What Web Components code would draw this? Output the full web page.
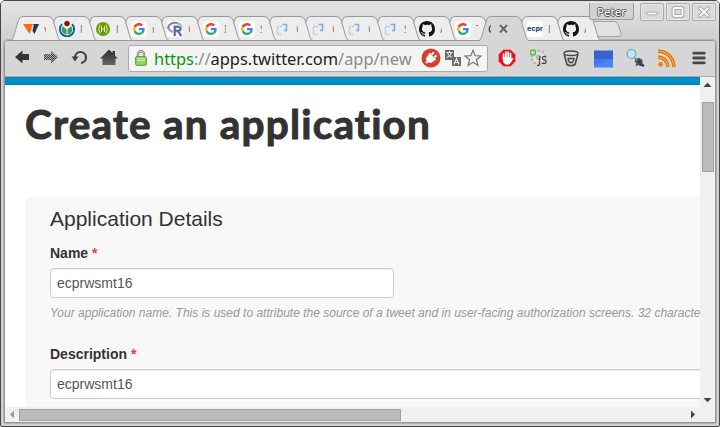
<!DOCTYPE html>
<html lang="en"><head><meta charset="utf-8"><title>Create an application</title>
<style>html,body{margin:0;width:720px;height:427px;overflow:hidden;background:#fff}</style></head>
<body><app-window></app-window>
<script>
const define=(name,html)=>customElements.define(name,class extends HTMLElement{
  connectedCallback(){ if(this.shadowRoot)return; const r=this.attachShadow({mode:'open'}); r.innerHTML=typeof html==='function'?html(this):html; }
});
const ICONS={
google:`<svg viewBox="0 0 16 16" width="16" height="16"><rect width="16" height="16" rx="4" fill="#fff"/><g transform="translate(2 2) scale(.25)"><path fill="#EA4335" d="M24 9.5c3.5 0 6.700 1.200 9.200 3.600l6.900-6.900C35.900 2.400 30.500 0 24 0 14.600 0 6.500 5.400 2.600 13.200l8 6.200C12.400 13.700 17.700 9.500 24 9.500z"/><path fill="#4285F4" d="M47 24.600c0-1.600-.2-3.100-.4-4.600H24v9h12.900c-.6 3-2.300 5.500-4.800 7.200l7.700 6C44.400 38 47 32 47 24.600z"/><path fill="#FBBC05" d="M10.500 28.600a14.500 14.500 0 0 1 0-9.200l-8-6.200a24 24 0 0 0 0 21.600z"/><path fill="#34A853" d="M24 48c6.500 0 11.900-2.100 15.900-5.800l-7.700-6c-2.200 1.500-4.900 2.300-8.200 2.300-6.300 0-11.600-4.200-13.500-9.900l-8 6.200C6.500 42.600 14.600 48 24 48z"/></g></svg>`,
github:`<svg viewBox="0 0 16 16" width="16" height="16"><path fill="#111" d="M8 0C3.580 0 0 3.580 0 8c0 3.540 2.290 6.530 5.470 7.590.4.070.55-.17.55-.38 0-.19-.01-.82-.01-1.490-2.010.37-2.530-.49-2.690-.94-.09-.23-.48-.94-.82-1.130-.28-.15-.68-.52-.01-.53.63-.01 1.080.58 1.230.82.72 1.210 1.870.87 2.330.66.070-.52.280-.87.510-1.070-1.780-.2-3.640-.89-3.640-3.950 0-.87.31-1.590.82-2.150-.08-.2-.36-1.020.08-2.120 0 0 .67-.21 2.200.82.64-.18 1.320-.27 2-.27s1.360.09 2 .27c1.530-1.040 2.200-.82 2.200-.82.44 1.100.16 1.920.08 2.120.51.56.82 1.270.82 2.150 0 3.070-1.870 3.750-3.650 3.950.29.25.54.73.54 1.480 0 1.070-.01 1.930-.01 2.200 0 .21.15.46.55.38A8.010 8.010 0 0 0 16 8c0-4.420-3.580-8-8-8z"/></svg>`,
wk:`<svg viewBox="0 0 16 16" width="16" height="16"><path fill="#ff6a13" d="M0 3h11L6.500 13z"/><path fill="#c8d4dc" d="M9 4h2L7.500 12z"/><path fill="#26344f" d="M11 3h5l-4.500 10-2-3z"/></svg>`,
wikimedia:`<svg viewBox="0 0 16 16" width="16" height="16"><path d="M3 3.200a7.100 7.100 0 1 0 10 0" fill="none" stroke="#086698" stroke-width="1.900"/><path d="M3.900 5.200l3.600 3v5.300a5 5 0 0 1-3.600-8.300zm8.200 0l-3.600 3v5.300a5 5 0 0 0 3.600-8.300z" fill="#399a66"/><circle cx="8" cy="2.600" r="2.700" fill="#990a0a"/></svg>`,
green:`<svg viewBox="0 0 16 16" width="16" height="16"><circle cx="8" cy="8" r="7" fill="#6b9c08"/><path d="M5 3.500Q2.500 8 5 12.500M11 3.500Q13.500 8 11 12.500M6.500 5v6M9.500 5v6M6 8h4" stroke="#e3efc1" stroke-width=".9" fill="none"/></svg>`,
r:`<svg viewBox="0 0 16 16" width="16" height="16"><rect width="16" height="16" fill="#fff"/><ellipse cx="8" cy="6.500" rx="6.500" ry="4.600" fill="none" stroke="#a2a5aa" stroke-width="2.400"/><path d="M1.200 8C0 3 6 1 10 1.700" stroke="#686b70" fill="none"/><path d="M7.500 15V5.500h3.700c3.600 0 3.200 4.400.3 4.500L14.500 15M8 10h3" fill="none" stroke="#dce4f4" stroke-width="3.500"/><path d="M7.800 15V5.800h3.500c3.200 0 2.800 4 0 4H8M11 10l3.200 5" fill="none" stroke="#536bab" stroke-width="2"/></svg>`,
code:`<svg viewBox="0 0 16 16" width="16" height="16"><path d="M7 5.500H2.500v8H6" fill="none" stroke="#b5cbef" stroke-width="1.400" stroke-dasharray="2 .5"/><path d="M7.500 3.500h4v6H9" fill="none" stroke="#7ba6f2" stroke-width="1.500"/></svg>`,
ecpr:`<svg viewBox="0 0 16 16" width="16" height="16"><rect width="16" height="16" fill="#fff"/><text x="0" y="9.500" font-family="Inter, sans-serif" font-weight="800" font-size="6.600" textLength="16" lengthAdjust="spacingAndGlyphs" fill="#31506f">ecpr</text></svg>`,
back:`<svg viewBox="0 0 16 14" width="16" height="14"><path d="M1 7l7.500-6.500V4H15v6H8.500v3.500z" fill="#343434"/></svg>`,
forward:`<svg viewBox="0 0 16 14" width="16" height="14"><defs><pattern id="p" width="2" height="2" patternUnits="userSpaceOnUse"><rect width="2" height="2" fill="#aaa"/><rect width="1" height="1" fill="#444"/><rect x="1" y="1" width="1" height="1" fill="#444"/></pattern></defs><path d="M15 7L8 .5V4H1v6h7v3.500z" fill="url(#p)"/></svg>`,
reload:`<svg viewBox="0 0 18 16" width="18" height="16"><path d="M4 8.500a5.500 5.500 0 1 1 6 5.500" fill="none" stroke="#404040" stroke-width="2.200"/><path d="M.5 7.500h7L4 12.500z" fill="#404040"/></svg>`,
home:`<svg viewBox="0 0 18 17" width="18" height="17"><defs><linearGradient id="h" x2="0" y2="1"><stop stop-color="#2b2b2b"/><stop offset="1" stop-color="#666"/></linearGradient></defs><path d="M9 .5L0 9.500h2.500V16h13V9.500H18l-3-3V2h-2.500v2z" fill="url(#h)"/></svg>`,
lock:`<svg viewBox="0 0 12 16" width="12" height="16"><path d="M3 8V4.200a3 3 0 0 1 6 0V8" fill="none" stroke="#858585" stroke-width="2.400"/><path d="M3 8V4.200a3 3 0 0 1 6 0V8" fill="none" stroke="#ddd" stroke-width=".8"/><rect x=".7" y="6.700" width="10.600" height="8.600" rx="1" fill="#91d461" stroke="#4f9a2c"/><path d="M2 8.500h8M2 10.500h8" stroke="#c4eeaa"/></svg>`,
plug:`<svg viewBox="0 0 20 20" width="20" height="20"><circle cx="10" cy="10" r="9.500" fill="#d6402f"/><g transform="rotate(45 10 10)" fill="#fff"><path d="M6 8h8v3a4 4 0 0 1-8 0z"/><path d="M7 4h2v3H7zM11 4h2v3h-2zM5.300 7.300h9.400V9H5.300zM9 14h2v3H9z"/></g></svg>`,
translate:`<svg viewBox="0 0 16 16" width="16" height="16"><rect width="9" height="10" fill="#6c6c6c"/><path d="M1.500 2.500h6M4.500 1v1.500M2.500 3Q4 6.500 7.500 7.500M6.500 3Q5 6.500 1.500 7.500" stroke="#eee" fill="none"/><rect x="7" y="7" width="9" height="9" fill="#6c6c6c"/><path d="M9 14.500l2.500-6 2.500 6M10 12.500h3" stroke="#eee" fill="none" stroke-width="1.200"/></svg>`,
star:`<svg viewBox="0 0 18 18" width="18" height="18"><path d="M9 1.200l2.100 5.500 5.900.3-4.600 3.700 1.500 5.800L9 13.300l-4.900 3.200 1.500-5.800L1 7l5.900-.3z" fill="#f5f5f5" stroke="#777" stroke-width="1.200"/></svg>`,
hand:`<svg viewBox="0 0 18 18" width="18" height="18"><path d="M5.500.5h7l5 5v7l-5 5h-7l-5-5v-7z" fill="#e8141c" stroke="#e99" stroke-width=".6"/><path d="M5.600 10V5M7.900 9V3M10.200 9V3M12.500 10V4.600" stroke="#fff" stroke-width="1.700" stroke-linecap="round"/><path d="M4.800 8h8.500v2l1.300-1.200.9.500L13 13.500l-2 2H7.500L5 13z" fill="#fff"/></svg>`,
js:`<svg viewBox="0 0 18 18" width="18" height="18"><circle cx="8.500" cy="8.500" r="6.500" fill="#dedede" stroke="#b0b0b0" stroke-width="2.200" stroke-dasharray="2.700 1.400"/><circle cx="8.500" cy="8.500" r="5.900" fill="#e0e0e0"/><circle cx="8.500" cy="8.500" r="2.200" fill="#d0d0d0" stroke="#a5a5a5"/><circle cx="3" cy="3.500" r="2.600" fill="#b4ecac" stroke="#46b647" stroke-width="1.200"/><text x="8" y="15" font-family="Noto Sans,sans-serif" font-size="10.500" fill="#222" textLength="9">JS</text></svg>`,
trash:`<svg viewBox="0 0 16 17" width="16" height="17"><ellipse cx="8" cy="3.200" rx="7" ry="2.300" fill="#ddd" stroke="#484848" stroke-width="1.500"/><path d="M1.200 4.500L4 14.500q4 2.500 8 0l2.800-10" fill="none" stroke="#484848" stroke-width="1.600"/><path d="M4.500 8.500h7M5 9l1.500 3.500h3l1.500-3.500" fill="none" stroke="#444" stroke-width="1.300"/></svg>`,
calendar:`<svg viewBox="0 0 19 19" width="19" height="19"><path d="M2 0h3v2H2zM14 0h3v2h-3z" fill="#c7cce0"/><path d="M0 1.500h19V10H0z" fill="#3563d0"/><path d="M0 10h19v8.500H0z" fill="#4585f5"/><path d="M0 10h19l-5 1-14 5z" fill="#3f78e8"/></svg>`,
search:`<svg viewBox="0 0 19 18" width="19" height="18"><path d="M8.500 13l1-3 4-1 3 2v3l2 3-5-1-4 1 1-3z" fill="#435168"/><path d="M10 10l4 3M13 15l5 2" stroke="#213f71" stroke-width="2"/><path d="M8 8.500l3.500 3" stroke="#b88762" stroke-width="1.600"/><circle cx="5.500" cy="5" r="4.300" fill="#c1eaf7" stroke="#73a9ce" stroke-width="1.300"/></svg>`,
rss:`<svg viewBox="0 0 18 18" width="18" height="18"><g fill="none" stroke="#d96b00" stroke-width="3.400"><path d="M0 2.200A15.500 15.500 0 0 1 15.800 18M0 8.200A9.600 9.600 0 0 1 9.800 18"/></g><g fill="none" stroke="#ff9f32" stroke-width="1.600"><path d="M0 2.200A15.500 15.500 0 0 1 15.800 18M0 8.200A9.600 9.600 0 0 1 9.800 18"/></g><circle cx="2.600" cy="15.300" r="2.400" fill="#ef8010"/></svg>`,
menu:`<svg viewBox="0 0 14 14" width="14" height="14"><path d="M1.700 2.200h10.600M1.700 7h10.600M1.700 11.800h10.600" stroke="#484848" stroke-width="2.800" stroke-linecap="round"/></svg>`
};
define('ui-icon',e=>`<style>:host{display:block;line-height:0;flex:none}svg{display:block}</style>${ICONS[e.getAttribute('name')]}`);
define('browser-tab',e=>{const a=e.hasAttribute('active');return `<style>:host{display:grid;flex:none;width:50px;height:25px;margin-right:-14px;position:relative}
:host>*{grid-area:1/1}.c{display:flex;padding:5px 0 0 12px;gap:5px;font:11px/16px "Noto Sans",sans-serif}
.t{width:2px;overflow:hidden;height:16px;color:#a0745a}.a{padding-left:9px;gap:8px}.a .t{width:3px;color:#402028}ui-icon{height:16px}svg{display:block}</style>
<svg width="50" height="25" viewBox="0 0 50 25"><path d="M0 24.500Q1.500 24 2.500 21L7.500 4Q8.800.5 12 .5H37Q40.500.5 42 4L47 21Q48 24.500 50 24.500${a?'V25H0z':'z'}" fill="${a?'#d6d6d6':'#ededed'}"/><path d="M0 24.500Q1.500 24 2.500 21L7.500 4Q8.800.5 12 .5H37Q40.500.5 42 4L47 21Q48 24.500 50 24.500${a?'':'H0'}" fill="none" stroke="#999"/></svg>
<div class="c ${a?'a':''}">${a?`<span class="t">C</span><svg width="9" height="16" viewBox="0 0 9 16"><path d="M1 4l7 7.500M8 4l-7 7.500" stroke="#666" stroke-width="1.900"/></svg>`:`<ui-icon name="${e.getAttribute('icon')}"></ui-icon><span class="t"><slot></slot></span>`}</div>`});
define('window-button',e=>`<style>:host{display:flex;align-items:center;justify-content:center;box-sizing:border-box;height:18px;width:24px;border:1px solid #aaa;border-radius:2px;background:#dadada;box-shadow:inset 0 0 0 1px #e8e8e8}svg{display:block}</style><svg width="14" height="12" viewBox="0 0 14 12"><g fill="none" stroke="#969696" stroke-width="3.600" stroke-linecap="round">${e.getAttribute('shape')}</g><g fill="none" stroke="#fafafa" stroke-width="2" stroke-linecap="round">${e.getAttribute('shape')}</g></svg>`);
define('title-bar',()=>{const tabs=[['wk','v'],['wikimedia','l'],['green','l'],['google','r'],['r','C'],['google','I'],['google','S'],['code','C'],['code','C'],['code','C'],['code','S'],['github','A'],['google','T'],null,['ecpr','E'],['github','A']];
return `<style>:host{display:grid;height:39px;background:linear-gradient(#e3e3e3,#d0d0d0);grid-template-columns:1fr}
.tabs{grid-area:1/1;display:flex;padding:15px 0 0 10px;height:25px}.new{display:block;flex:none;margin:5px 0 0 3px}.win{grid-area:1/1;display:flex;justify-content:flex-end;padding:2px 3px 0;gap:2px;height:18px;z-index:40}
.peter{box-sizing:border-box;width:45px;height:17px;border:1px solid #999;border-top:0;border-radius:0 0 3px 3px;background:#d2d2d2;color:#fff;font:11.5px/17px "Noto Sans",sans-serif;text-align:center;text-shadow:1px 0 #555,-1px 0 #555,0 1px #555,0 -1px #555;margin-right:4px}</style>
<div class="tabs">${tabs.map((t,i)=>t?`<browser-tab style="z-index:${20-i}" icon="${t[0]}">${t[1]}</browser-tab>`:`<browser-tab active style="z-index:30"></browser-tab>`).join('')}
<svg class="new" width="35" height="18" viewBox="0 0 35 18"><path d="M3 .5H24Q27 .5 28 3L31 12Q32 15.500 29 15.500H9Q6 15.500 5 13L1.500 3Q.7.500 3 .5z" fill="#e2e2e2" stroke="#a0a0a0"/></svg></div>
<div class="win"><div class="peter">Peter</div><window-button shape='<path d="M3 7.500h8"/>'></window-button><window-button shape='<rect x="2.500" y="2" width="9" height="8" rx="1"/>'></window-button><window-button shape='<path d="M3 2l8 8M11 2l-8 8"/>'></window-button></div>`});
define('tool-bar',`<style>:host{display:flex;box-sizing:border-box;height:36px;background:#d6d6d6;border-bottom:1px solid #aaa;align-items:center;padding:0 0 1px 9px}
.nav{display:grid;flex:none;width:114px;align-items:center;justify-items:center;grid-template-columns:16px 42px 16px 42px;box-sizing:border-box;padding-bottom:2px}
.url{box-sizing:border-box;flex:none;width:360px;height:27px;border:1px solid #aaa;border-radius:3px;background:#f4f4f4;display:flex;align-items:center;padding:0 3px 0 6px}
.addr{flex:none;font:16.42px/25px "Noto Sans",sans-serif;white-space:nowrap;width:261px;margin-left:7px;margin-right:6px;color:#222}.s{color:#0c9410}.g{color:#8a8a8a}
.acts{display:flex;align-items:center;gap:4px}.acts>:last-child{margin-left:-1px}.ext{flex:none;display:grid;grid-template-columns:repeat(7,32px);justify-items:center;align-items:center;margin-left:3px}</style>
<div class="nav"><ui-icon name="back"></ui-icon><ui-icon name="forward"></ui-icon><ui-icon name="reload"></ui-icon><ui-icon name="home"></ui-icon></div>
<div class="url"><ui-icon name="lock"></ui-icon><div class="addr"><span class="s">https</span><span class="g">://</span>apps.twitter.com<span class="g">/app/new</span></div><div class="acts"><ui-icon name="plug"></ui-icon><ui-icon name="translate"></ui-icon><ui-icon name="star"></ui-icon></div></div>
<div class="ext">${['hand','js','trash','calendar','search','rss','menu'].map(n=>`<ui-icon name="${n}"></ui-icon>`).join('')}</div>`);
define('form-field',e=>`<style>:host{display:block;font-family:"Liberation Sans",Arial,sans-serif}label{display:block;font-weight:700;font-size:14px;line-height:20px;color:#333;margin-bottom:5px}i{color:#f33;font-style:normal}
.in{box-sizing:border-box;height:30px;width:${e.getAttribute('w')}px;border:1px solid #ccc;border-radius:4px;background:#fff;box-shadow:inset 0 1px 1px rgba(0,0,0,.075);font-size:14px;line-height:28px;padding:0 6px;color:#555}</style><label><slot></slot> <i>*</i></label><div class="in">ecprwsmt16</div>`);
define('app-page',`<style>:host{display:block;overflow:hidden;background:#fff;font-family:"Liberation Sans",Arial,sans-serif}
.blue{height:8px;background:linear-gradient(#0084b8,#0093cb 35%,#0090c7 75%,#007fae)}h1{font:700 40.5px/48px Lato,sans-serif;color:#333;margin:15px 0 0 20px;height:97px;white-space:nowrap;letter-spacing:1.2px;-webkit-text-stroke:1px #333}
.panel{margin-left:20px;padding:11px 0 40px 25px;border-radius:4px;background:#f8f8f8;width:900px}h2{font-weight:400;font-size:21px;line-height:22px;margin:0;color:#333}.n{margin-top:13px}.help{font-size:12px;font-style:italic;line-height:20px;margin:5px 0 21px;color:#999;white-space:nowrap;letter-spacing:.008px}</style>
<div class="blue"></div><h1>Create an application</h1><div class="panel"><h2>Application Details</h2><form-field class="n" w="344">Name</form-field><div class="help">Your application name. This is used to attribute the source of a tweet and in user-facing authorization screens. 32 characte</div><form-field w="800">Description</form-field></div>`);
define('scroll-bar',e=>{const v=e.hasAttribute('vertical');return `<style>:host{display:flex;flex-direction:${v?'column':'row'};background:#f0f0f0}.th{box-sizing:border-box;background:#bbb;border:1px solid #a0a0a0;${v?'width:12px;height:70px;margin:14px 0 0 2px':'width:382px;height:12px;margin:2px 0 0 4px'}}svg{display:block;flex:none}.end{${v?'margin:auto 0 4px':'margin:0 2px 0 auto'}}</style>
${v?`<svg width="15" height="11"><path d="M3.500 10l4-4.500 4 4.500z" fill="#444"/></svg>`:`<svg width="10" height="15"><path d="M5 7.500l4-4v8z" fill="#999"/></svg>`}<div class="th"></div>${v?`<svg class="end" width="15" height="5"><path d="M3.500 0h8l-4 4.300z" fill="#444"/></svg>`:`<svg class="end" width="9" height="15"><path d="M2 3.500l4 4-4 4z" fill="#444"/></svg>`}`});
define('app-window',`<style>:host{display:block;box-sizing:border-box;width:720px;height:427px;border:1px solid #464646;border-radius:5px 5px 2px 2px;background:#d0d0d0;overflow:hidden}
.frame{box-sizing:border-box;height:383px;margin:0 3px 3px;border:1px solid #969696;border-radius:4px 4px 1px 1px;overflow:hidden;box-shadow:0 0 0 1px #b2b2b2}
.view{display:grid;grid-template-columns:695px 15px;grid-template-rows:330px 15px;background:#f0f0f0}</style>
<title-bar></title-bar><div class="frame"><tool-bar></tool-bar><div class="view"><app-page></app-page><scroll-bar vertical></scroll-bar><scroll-bar></scroll-bar></div></div>`);
</script></body></html>
